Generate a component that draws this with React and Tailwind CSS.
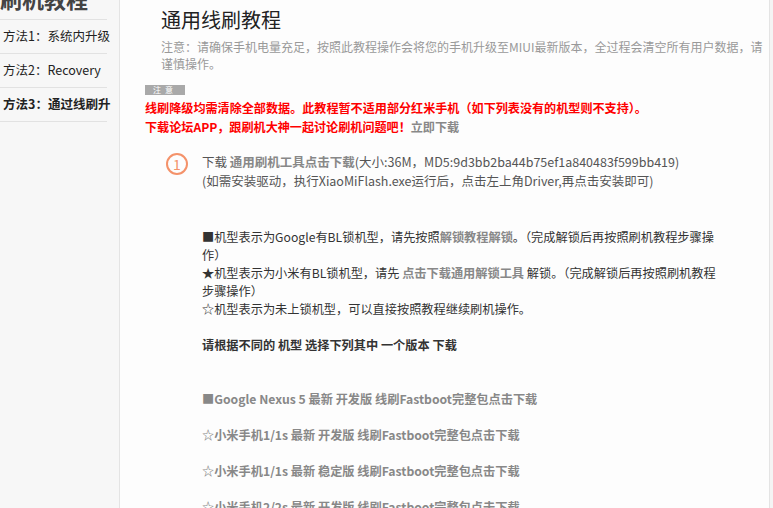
import React from "react";

const menu = [
  { label: "方法1：系统内升级", active: false },
  { label: "方法2：Recovery", active: false },
  { label: "方法3：通过线刷升", active: true },
];

const links = [
  "■Google Nexus 5 最新 开发版 线刷Fastboot完整包点击下载",
  "☆小米手机1/1s 最新 开发版 线刷Fastboot完整包点击下载",
  "☆小米手机1/1s 最新 稳定版 线刷Fastboot完整包点击下载",
  "☆小米手机2/2s 最新 开发版 线刷Fastboot完整包点击下载",
];

const App = () => {
  return (
    <div
      className="flex h-[508px] w-[773px] overflow-hidden bg-[#f4f4f4] text-[13px] text-[#333]"
      style={{ fontFamily: '"Noto Sans CJK SC", "Noto Sans", sans-serif' }}
    >
      {/* sidebar */}
      <div className="w-[120px] shrink-0 border-r border-[#e4e4e4] bg-[#f7f7f7] pr-[12px]">
        <div className="-mt-[18px] h-[38px] border-b border-[#e2e2e2] text-[22px] font-bold leading-[32px] text-[#444]">
          刷机教程
        </div>
        {menu.map((item) => (
          <div
            key={item.label}
            className={`flex h-[34px] items-center border-b border-[#e2e2e2] pl-[3px] text-[12.5px] whitespace-nowrap text-[#222] ${
              item.active ? "font-bold" : ""
            }`}
          >
            {item.label}
          </div>
        ))}
      </div>

      {/* main */}
      <div className="w-[650px] shrink-0 overflow-hidden border-r border-[#e4e4e4] bg-[#fdfdfd]">
        <div className="pl-[41px] pt-[6px]">
          <h1 className="text-[20px] leading-[28px] text-[#222]">通用线刷教程</h1>
          <p className="mt-[4px] whitespace-nowrap text-[12px] leading-[17px] text-[#999]">
            注意：请确保手机电量充足，按照此教程操作会将您的手机升级至MIUI最新版本，全过程会清空所有用户数据，请
            <br />
            谨慎操作。
          </p>
        </div>

        <div className="pl-[25px] pt-[13px]">
          <div className="flex h-[10px] w-[40px] items-center justify-center bg-[#a9a9a9] text-[8px] leading-none tracking-[4px] text-white">
            注意
          </div>
          <div className="mt-[3px] whitespace-nowrap text-[12.1px] font-bold leading-[19px] text-[#ff0000]">
            <div>线刷降级均需清除全部数据。此教程暂不适用部分红米手机（如下列表没有的机型则不支持）。</div>
            <div>
              下载论坛APP，跟刷机大神一起讨论刷机问题吧！<span className="text-[#888]">立即下载</span>
            </div>
          </div>
        </div>

        <div className="mt-[16px] flex pl-[46px]">
          <div className="mt-[1px] flex h-[22px] w-[22px] shrink-0 items-center justify-center rounded-full border-2 border-[#f4926a] text-[14px] leading-none text-[#f4926a]">
            1
          </div>
          <div className="ml-[14px] whitespace-nowrap text-[12.5px] leading-[19px] text-[#555]">
            <div>
              下载 <span className="font-bold text-[#888]">通用刷机工具点击下载</span>(大小:36M，MD5:9d3bb2ba44b75ef1a840483f599bb419)
            </div>
            <div>(如需安装驱动，执行XiaoMiFlash.exe运行后，点击左上角Driver,再点击安装即可)</div>
          </div>
        </div>

        <div className="mt-[38px] pl-[82px] text-[12.2px] leading-[18px] whitespace-nowrap text-[#333]">
          <div>
            ■机型表示为Google有BL锁机型，请先按照<span className="font-bold text-[#888]">解锁教程解锁</span>。（完成解锁后再按照刷机教程步骤操
          </div>
          <div>作）</div>
          <div>
            ★机型表示为小米有BL锁机型，请先 <span className="font-bold text-[#888]">点击下载通用解锁工具</span> 解锁。（完成解锁后再按照刷机教程
          </div>
          <div>步骤操作）</div>
          <div>☆机型表示为未上锁机型，可以直接按照教程继续刷机操作。</div>

          <div className="mt-[18px] font-bold text-[#333]">请根据不同的 机型 选择下列其中 一个版本 下载</div>

          <div className="mt-[36px] flex flex-col gap-[18px]">
            {links.map((l) => (
              <div key={l} className="font-bold text-[#888]">
                {l}
              </div>
            ))}
          </div>
        </div>
      </div>
    </div>
  );
};

export default App;
